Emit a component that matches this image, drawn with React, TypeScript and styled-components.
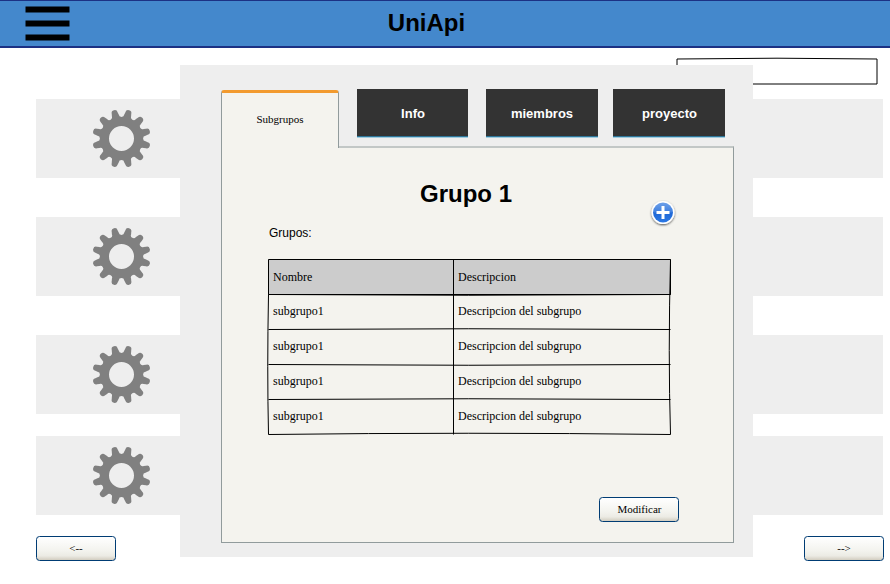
import React from "react";
import styled, { createGlobalStyle } from "styled-components";

const GlobalStyle = createGlobalStyle`
  *, *::before, *::after { box-sizing: border-box; }
  html, body { margin: 0; padding: 0; background: #fff; }
  body { overflow: hidden; color: #000; font-family: "Liberation Sans", Arial, sans-serif; }
  h1, h2, p { margin: 0; }
`;

const Page = styled.div`
  position: relative;
  display: flex;
  flex-direction: column;
  width: 890px;
  height: 584px;
  overflow: hidden;
`;

const Header = styled.header`
  display: grid;
  grid-template-columns: 1fr auto 1fr;
  flex: none;
  height: 48px;
  padding: 0 25px;
  background: #4488cc;
  border-top: 1px solid #1c3184;
  border-bottom: 2px solid #1c3184;
`;

const MenuIcon = styled.svg`
  display: block;
  width: 45px;
  height: 42px;
`;

const Brand = styled.h1`
  padding-right: 37px;
  font-size: 24px;
  line-height: 28px;
  margin-top: 8px;
`;

const SearchRow = styled.div`
  display: flex;
  flex: none;
  justify-content: flex-end;
  height: 51px;
  padding: 8px 10px 0 0;
`;

const SearchFrame = styled.svg`
  display: block;
  width: 205px;
  height: 32px;
`;

const List = styled.main`
  display: flex;
  flex: none;
  flex-direction: column;
  padding: 0 7px 0 36px;
`;

const ListRow = styled.div<{ $gap: number }>`
  display: flex;
  align-items: center;
  height: 79px;
  margin-bottom: ${(p) => p.$gap}px;
  padding-left: 55px;
  background: #eeeeee;
`;

const GearIcon = styled.svg`
  display: block;
  width: 61px;
  height: 61px;
`;

const Footer = styled.footer`
  display: flex;
  justify-content: space-between;
  padding: 21px 6px 0 36px;
`;

const Button = styled.button<{ $inset?: number }>`
  display: flex;
  align-items: center;
  justify-content: center;
  width: 80px;
  height: 25px;
  padding: 0 0 1px ${(p) => p.$inset ?? 0}px;
  border: 1px solid #003c74;
  border-radius: 3.5px;
  background: linear-gradient(#ffffff 0%, #f3f3ee 60%, #ecebe4 82%, #d2cdc0 100%);
  color: #000;
  font: 11px "Liberation Serif", "Times New Roman", serif;
`;

const Dialog = styled.section`
  position: absolute;
  left: 180px;
  top: 65px;
  width: 573px;
  height: 492px;
  padding: 24px 19px 14px 41px;
  background: #eeeeee;
`;

const TabBar = styled.nav`
  display: flex;
  height: 57px;
`;

const ActiveTab = styled.div`
  position: relative;
  z-index: 1;
  display: flex;
  align-items: center;
  justify-content: center;
  width: 118px;
  height: 58px;
  margin: 1px 18px 0 0;
  padding-bottom: 4px;
  border: 1px solid #919b9c;
  border-top: 3px solid #f29a2e;
  border-bottom: 0;
  border-radius: 3px 3px 0 0;
  background: #f4f3ee;
  font: 11px "Liberation Serif", "Times New Roman", serif;
`;

const Tab = styled.div<{ $width: number; $gap: number; $inset: number }>`
  display: flex;
  align-items: center;
  justify-content: center;
  width: ${(p) => p.$width}px;
  height: 49px;
  margin-right: ${(p) => p.$gap}px;
  padding-left: ${(p) => p.$inset}px;
  border-bottom: 1px solid #a0cde0;
  background: #333333;
  box-shadow: inset 0 -1px #2f7699;
  color: #fff;
  font-size: 13px;
  font-weight: bold;
`;

const Panel = styled.div`
  display: flex;
  flex-direction: column;
  width: 513px;
  height: 397px;
  padding: 31px 54px 20px 46px;
  border: 1px solid #919b9c;
  border-top: 2px solid #c2c7c6;
  background: #f4f3ee;
`;

const PanelHead = styled.div`
  display: grid;
  grid-template-columns: 1fr auto 1fr;
  height: 47px;
`;

const PanelTitle = styled.h2`
  grid-column: 2;
  padding: 1px 15px 0 0;
  font-size: 24px;
  line-height: 28px;
`;

const AddIcon = styled.svg`
  justify-self: end;
  display: block;
  width: 32px;
  height: 32px;
  margin: 18px 0 0 0;
`;

const Label = styled.p`
  padding-left: 1px;
  height: 33px;
  font-size: 12px;
  line-height: 14px;
`;

const TableBox = styled.div`
  position: relative;
  width: 403px;
  height: 176px;
  font: 12px "Liberation Serif", "Times New Roman", serif;
`;

const TableRow = styled.div<{ $head?: boolean }>`
  display: grid;
  grid-template-columns: 185px 218px;
  align-items: center;
  height: 35px;
  padding-top: ${(p) => (p.$head ? 2 : 0)}px;
  background: ${(p) => (p.$head ? "#cccccc" : "transparent")};
`;

const Cell = styled.span`
  padding-left: 5px;
`;

const TableLines = styled.svg`
  position: absolute;
  left: -2px;
  top: -2px;
  width: 408px;
  height: 180px;
`;

const Actions = styled.div`
  display: flex;
  justify-content: flex-end;
  margin-top: auto;
`;

const TEETH = 12;

// Outline of a cog centred on the origin: round tooth tips joined by round valleys.
function gearOutline(): string {
  const polar = (r: number, deg: number) => {
    const a = (deg * Math.PI) / 180;
    return `${(r * Math.sin(a)).toFixed(2)} ${(-r * Math.cos(a)).toFixed(2)}`;
  };
  let d = "";
  for (let i = 0; i < TEETH; i++) {
    const mid = 15 + (i * 360) / TEETH;
    d += `${i ? "L" : "M"}${polar(26.4, mid - 6.7)}`;
    d += `A3.05 3.05 0 0 1 ${polar(26.4, mid + 6.7)}`;
    d += `L${polar(24.2, mid + 8.4)}`;
    d += `A2.8 2.8 0 0 0 ${polar(24.2, mid + 21.6)}`;
  }
  return `${d}ZM12.5 0A12.5 12.5 0 1 0 -12.5 0A12.5 12.5 0 1 0 12.5 0Z`;
}

const GEAR = gearOutline();

const Gear = () => (
  <GearIcon viewBox="-30.5 -30.5 61 61">
    <path d={GEAR} fill="#808080" fillRule="evenodd" />
  </GearIcon>
);

const rowGaps = [39, 39, 22, 0];
const tabs = [
  { label: "Info", width: 111, gap: 18, inset: 1 },
  { label: "miembros", width: 112, gap: 15, inset: 0 },
  { label: "proyecto", width: 112, gap: 0, inset: 1 },
];
const groups = Array.from({ length: 4 }, () => ({
  name: "subgrupo1",
  description: "Descripcion del subgrupo",
}));

export default function App() {
  return (
    <>
      <GlobalStyle />
      <Page>
        <Header>
          <MenuIcon viewBox="0 0 45 42">
            {[5.5, 19.5, 33.5].map((y) => (
              <rect key={y} x="0.5" y={y} width="44" height="6" />
            ))}
          </MenuIcon>
          <Brand>UniApi</Brand>
        </Header>
        <SearchRow>
          <SearchFrame viewBox="0 0 205 32" fill="none" stroke="#000">
            <path d="M2 3Q102 1.4 202 3V28H2Z" />
          </SearchFrame>
        </SearchRow>
        <List>
          {rowGaps.map((gap, i) => (
            <ListRow key={i} $gap={gap}>
              <Gear />
            </ListRow>
          ))}
        </List>
        <Footer>
          <Button>&lt;--</Button>
          <Button>--&gt;</Button>
        </Footer>

        <Dialog>
          <TabBar>
            <ActiveTab>Subgrupos</ActiveTab>
            {tabs.map((t) => (
              <Tab key={t.label} $width={t.width} $gap={t.gap} $inset={t.inset}>
                {t.label}
              </Tab>
            ))}
          </TabBar>
          <Panel>
            <PanelHead>
              <PanelTitle>Grupo 1</PanelTitle>
              <AddIcon viewBox="0 0 32 32">
                <defs>
                  <linearGradient id="addFill" x1="0" y1="0" x2="0" y2="1">
                    <stop offset="0" stopColor="#6ea0e8" />
                    <stop offset="0.48" stopColor="#3f7fdf" />
                    <stop offset="0.52" stopColor="#1f68d6" />
                    <stop offset="1" stopColor="#2b78e4" />
                  </linearGradient>
                  <filter id="addShadow" x="-30%" y="-30%" width="160%" height="160%">
                    <feDropShadow dx="0" dy="1" stdDeviation="1" floodOpacity="0.65" />
                  </filter>
                </defs>
                <circle cx="16" cy="15.5" r="11.5" fill="#fff" filter="url(#addShadow)" />
                <circle cx="16" cy="15.5" r="10" fill="url(#addFill)" />
                <path d="M16 9V22M9.5 15.5H22.5" stroke="#fff" strokeWidth="3" />
              </AddIcon>
            </PanelHead>
            <Label>Grupos:</Label>
            <TableBox>
              <TableRow $head>
                <Cell>Nombre</Cell>
                <Cell>Descripcion</Cell>
              </TableRow>
              {groups.map((g, i) => (
                <TableRow key={i}>
                  <Cell>{g.name}</Cell>
                  <Cell>{g.description}</Cell>
                </TableRow>
              ))}
              <TableLines viewBox="-2 -2 408 180" fill="none" stroke="#000">
                <path d="M0.5 0.5H402.5V35.5H0.5Z" />
                <path d="M185.5 0.5V175.5" />
                <path d="M0.5 35.5Q200 37 402.5 35.5" />
                <path d="M0.5 70.5Q200 69 402.5 70.5" />
                <path d="M0.5 105.5Q200 107 402.5 105.5" />
                <path d="M0.5 140.5Q200 139 402.5 140.5" />
                <path d="M0.5 175.5Q200 173 402.5 175.5" />
                <path d="M0.5 35.5Q-1 110 0.5 175.5" />
                <path d="M402.5 0.5Q400 95 402.5 175.5" />
              </TableLines>
            </TableBox>
            <Actions>
              <Button $inset={1}>Modificar</Button>
            </Actions>
          </Panel>
        </Dialog>
      </Page>
    </>
  );
}
